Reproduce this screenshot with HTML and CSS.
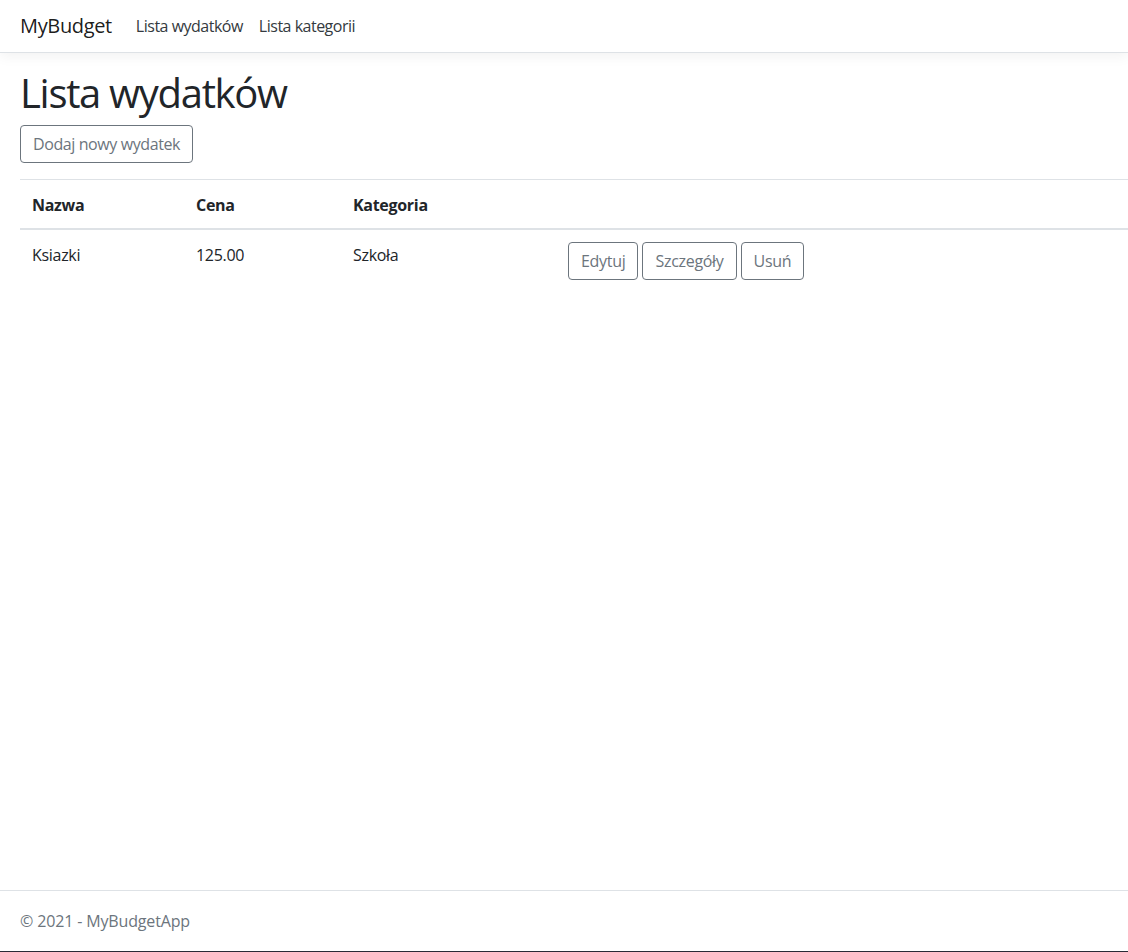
FILE: index.html
```html
<!DOCTYPE html>
<html lang="pl">
<head>
<meta charset="utf-8">
<title>Lista wydatków - MyBudget</title>
<link rel="stylesheet" href="styles.css">
</head>
<body>
<header class="navbar">
  <a class="brand" href="#">MyBudget</a>
  <nav class="nav">
    <a class="nav-link" href="#">Lista wydatków</a>
    <a class="nav-link" href="#">Lista kategorii</a>
  </nav>
</header>
<main class="main">
  <h1 class="title">Lista wydatków</h1>
  <p class="actions"><a class="btn" href="#">Dodaj nowy wydatek</a></p>
  <table class="table">
    <thead>
      <tr>
        <th class="c1">Nazwa</th>
        <th class="c2">Cena</th>
        <th class="c3">Kategoria</th>
        <th></th>
      </tr>
    </thead>
    <tbody>
      <tr>
        <td>Ksiazki</td>
        <td>125.00</td>
        <td>Szkoła</td>
        <td class="row-actions">
          <div class="btn-group">
            <a class="btn" href="#">Edytuj</a>
            <a class="btn" href="#">Szczegóły</a>
            <a class="btn" href="#">Usuń</a>
          </div>
        </td>
      </tr>
    </tbody>
  </table>
</main>
<footer class="footer">© 2021 - MyBudgetApp</footer>
<div class="taskbar-edge"></div>
</body>
</html>
```

FILE: styles.css
```css
* { box-sizing: border-box; }
html, body { height: 100%; }
body {
  margin: 0;
  font-family: "Open Sans", "Noto Sans", "Liberation Sans", sans-serif;
  font-size: 16px;
  line-height: 1.5;
  color: #212529;
  background: #fff;
  display: flex;
  flex-direction: column;
  min-height: 100vh;
}
a { text-decoration: none; }

.navbar {
  display: flex;
  align-items: center;
  height: 53px;
  padding: 0 20px;
  border-bottom: 1px solid #dee2e6;
  box-shadow: 0 4px 12px rgba(0, 0, 0, 0.05);
  flex-shrink: 0;
}
.brand {
  font-size: 20px;
  line-height: 30px;
  color: rgba(0, 0, 0, 0.9);
  margin-right: 16px;
  letter-spacing: -0.35px;
}
.nav { display: flex; }
.nav-link {
  color: #343a40;
  padding: 0 8px;
  font-size: 16px;
  letter-spacing: -0.5px;
}

.main {
  flex: 1;
  padding: 16px 0 0 20px;
}
.title {
  font-size: 40px;
  font-weight: 400;
  line-height: 48px;
  margin: 0 0 8px;
  letter-spacing: -1.3px;
}
.actions { margin: 0 0 16px; }

.btn {
  display: inline-block;
  color: #6c757d;
  border: 1px solid #6c757d;
  border-radius: 4px;
  padding: 6px 12px;
  font-size: 16px;
  line-height: 24px;
  letter-spacing: -0.4px;
  background: transparent;
}

.table {
  width: 100%;
  border-collapse: collapse;
}
.table th, .table td {
  padding: 13px 12px 11px;
  text-align: left;
  vertical-align: top;
  border-top: 1px solid #dee2e6;
  letter-spacing: -0.3px;
}
.table th { font-weight: 700; }
.table thead th { border-bottom: 2px solid #dee2e6; }
.table .c1 { width: 164px; }
.table .c2 { width: 157px; }
.table .c3 { width: 215px; }
.table td.row-actions { padding-top: 12px; padding-bottom: 12px; }
.btn-group { display: flex; gap: 4px; }
.btn-group .btn { letter-spacing: -0.3px; }

.footer {
  flex-shrink: 0;
  border-top: 1px solid #dee2e6;
  height: 61px;
  line-height: 61px;
  padding-left: 20px;
  color: #6c757d;
  letter-spacing: -0.15px;
}
.taskbar-edge {
  flex-shrink: 0;
  height: 1px;
  background: #2a2a36;
}
```
